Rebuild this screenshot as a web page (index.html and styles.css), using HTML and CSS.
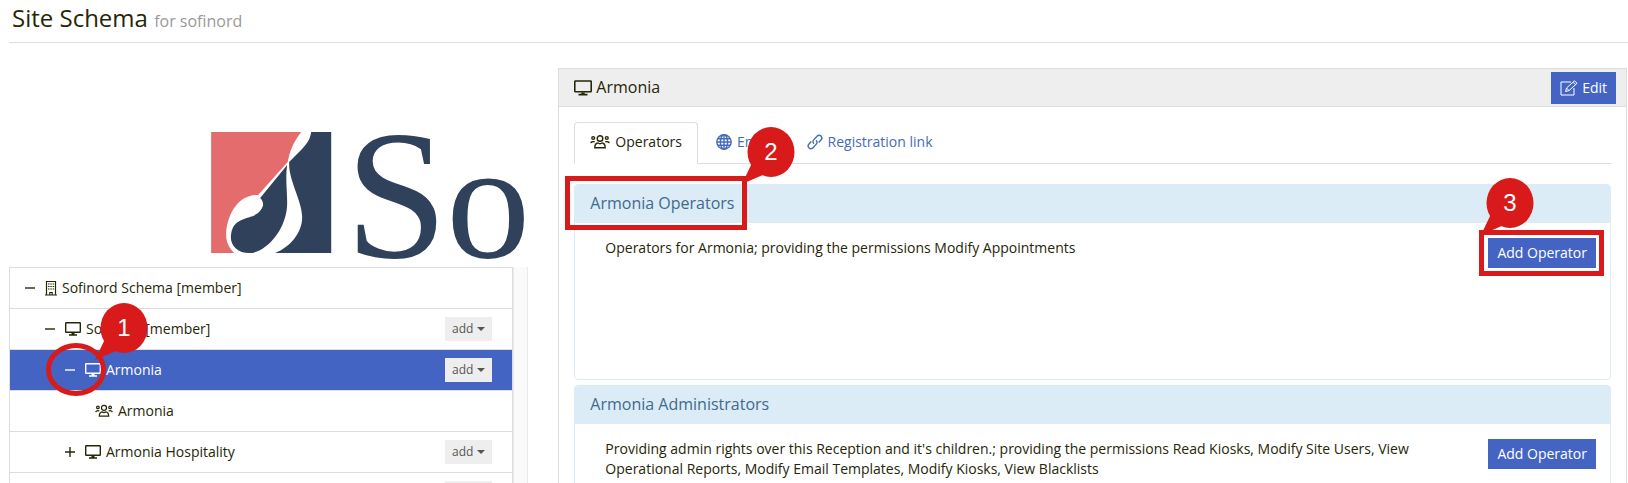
FILE: index.html
```
<!DOCTYPE html>
<html lang="en">
<head>
  <meta charset="UTF-8" />
  <title>Site Schema</title>
  <link rel="stylesheet" href="styles.css">
</head>
<body>

  <!-- Icons -->
  <svg class="sprite" aria-hidden="true">
    <symbol id="i-minus" viewBox="0 0 12 12"><path d="M1 6h10" /></symbol>
    <symbol id="i-plus" viewBox="0 0 12 12"><path d="M1 6h10M6 1v10" /></symbol>
    <symbol id="i-building" viewBox="0 0 12 16">
      <path d="M1.500 15V1.500h9V15M0 15h12M4.800 15v-2.500h2.400V15" />
      <path d="M3 4h1.500M5.300 4h1.500M7.600 4h1.500M3 6.500h1.500M5.300 6.500h1.500M7.600 6.500h1.500M3 9h1.500M5.300 9h1.500M7.600 9h1.500" />
    </symbol>
    <symbol id="i-monitor" viewBox="0 0 16 16">
      <rect x="0.700" y="1.700" width="14.600" height="9.600" rx="0.500" />
      <path d="M6.500 12h3v1.200H12v1.500H4v-1.500h2.500z" fill="currentColor" stroke="none" />
    </symbol>
    <symbol id="i-users" viewBox="0 0 20 16">
      <circle cx="10" cy="4.500" r="2.800" />
      <path d="M4.800 13.800c0-3 1.400-4.600 3.200-4.800 1.200.8 2.800.8 4 0 1.800.2 3.200 1.800 3.200 4.800z" />
      <circle cx="3.200" cy="4" r="1.400" />
      <circle cx="16.800" cy="4" r="1.400" />
      <path d="M.800 9.200c.2-1.600 2.400-1.800 4-1.300M19.200 9.200c-.2-1.600-2.400-1.800-4-1.300" />
    </symbol>
    <symbol id="i-globe" viewBox="0 0 16 16">
      <circle cx="8" cy="8" r="7.200" />
      <ellipse cx="8" cy="8" rx="3.600" ry="7.200" />
      <path d="M8 1v14M1 8h14M2 4.700h12M2 11.300h12" />
    </symbol>
    <symbol id="i-link" viewBox="0 0 16 16">
      <path d="M7 9.800C5.600 8.600 5.700 7 6.700 5.900L10 2.300c1.300-1.300 2.800-1.200 3.900-.2 1.200 1.100 1.200 2.700.1 3.900l-2.300 2.500" />
      <path d="M9 6.200c1.400 1.200 1.300 2.800.3 3.900L6 13.700c-1.300 1.300-2.800 1.200-3.900.2-1.200-1.100-1.200-2.700-.1-3.900l2.300-2.500" />
    </symbol>
    <symbol id="i-edit" viewBox="0 0 18 16">
      <path d="M11 2H1v13h13V8" />
      <path d="M5.500 11.500l1-3.500 8-7.200 2.500 2.500-8 7.300zM6.500 8l2.500 2.600M13 2.200l2.500 2.500" />
    </symbol>
    <symbol id="i-pin" viewBox="0 0 54 58">
      <ellipse cx="30" cy="25" rx="23.500" ry="25" />
      <path d="M1 57L11 36L24 47Z" />
    </symbol>
  </svg>

  <h1 class="page-header">Site Schema <small>for sofinord</small></h1>

  <main>
    <!-- Logo and tree -->
    <section class="sidebar">
      <svg class="logo" viewBox="0 0 519 213" role="img" aria-label="Sofinord">
        <path fill="#e56c6c" d="M202 78h90c-9 12-11 19-13.500 30L249 141c-21-1-32 22-32 40 0 7 3 13 8 18h-23z" />
        <path fill="#30415c" d="M302 78h20v121h-56c15-6 27-20 27-36 0-16-14-37-13-55 14-14 21-20 22-30z" />
        <path fill="#30415c" d="M278 111c-2 12 0 24 0 38 0 26-21 50-38 50-12 0-20-9-18-19 3-22 27-11 32-29 0-3-1-5-3-7z" />
        <text x="336" y="203" class="logo-text">S<tspan class="logo-small" x="437">o</tspan></text>
      </svg>

      <div class="tree-wrap">
        <ul class="tree">
          <li class="level-1">
            <svg class="icon toggle"><use href="#i-minus" /></svg>
            <svg class="icon building"><use href="#i-building" /></svg>
            <span>Sofinord Schema [member]</span>
          </li>
          <li class="level-2">
            <svg class="icon toggle"><use href="#i-minus" /></svg>
            <svg class="icon monitor"><use href="#i-monitor" /></svg>
            <span>Sofinord [member]</span>
            <button class="btn-add">add</button>
          </li>
          <li class="level-3 active">
            <svg class="icon toggle"><use href="#i-minus" /></svg>
            <svg class="icon monitor"><use href="#i-monitor" /></svg>
            <span>Armonia</span>
            <button class="btn-add">add</button>
            <div class="ring"></div>
            <svg class="pin pin-tree"><use href="#i-pin" /><text x="30" y="33">1</text></svg>
          </li>
          <li class="level-4">
            <svg class="icon users"><use href="#i-users" /></svg>
            <span>Armonia</span>
          </li>
          <li class="level-3">
            <svg class="icon toggle"><use href="#i-plus" /></svg>
            <svg class="icon monitor"><use href="#i-monitor" /></svg>
            <span>Armonia Hospitality</span>
            <button class="btn-add">add</button>
          </li>
          <li class="level-3">
            <button class="btn-add">add</button>
          </li>
        </ul>
        <div class="track"></div>
      </div>
    </section>

    <!-- Selected site -->
    <section class="site">
      <header>
        <svg class="icon monitor-lg"><use href="#i-monitor" /></svg>
        <h2>Armonia</h2>
        <button class="btn btn-edit"><svg class="icon edit"><use href="#i-edit" /></svg>Edit</button>
      </header>

      <div class="site-body">
        <nav class="tabs">
          <a href="#operators" class="active"><svg class="icon users-lg"><use href="#i-users" /></svg>Operators</a>
          <a href="#email"><svg class="icon globe"><use href="#i-globe" /></svg>Email</a>
          <a href="#registration"><svg class="icon globe"><use href="#i-link" /></svg>Registration link</a>
        </nav>

        <div class="panel panel-first" id="operators">
          <h3>Armonia Operators</h3>
          <div class="panel-body">
            <p>Operators for Armonia; providing the permissions Modify Appointments</p>
            <div class="action">
              <button class="btn">Add Operator</button>
              <div class="frame frame-button"></div>
              <svg class="pin pin-button"><use href="#i-pin" /><text x="30" y="33">3</text></svg>
            </div>
          </div>
          <div class="frame frame-title"></div>
          <svg class="pin pin-title"><use href="#i-pin" /><text x="30" y="33">2</text></svg>
        </div>

        <div class="panel">
          <h3>Armonia Administrators</h3>
          <div class="panel-body">
            <p>Providing admin rights over this Reception and it's children.; providing the permissions Read Kiosks, Modify Site Users, View Operational Reports, Modify Email Templates, Modify Kiosks, View Blacklists</p>
            <div class="action">
              <button class="btn">Add Operator</button>
            </div>
          </div>
        </div>
      </div>
    </section>
  </main>

</body>
</html>
```
FILE: styles.css
```
* { margin: 0; padding: 0; box-sizing: border-box; }

html { overflow: hidden; }

body {
  height: 100vh;
  overflow: hidden;
  font-family: "Open Sans", sans-serif;
  font-size: 14px;
  line-height: 20px;
  color: #262608;
  background: #fff;
}

button { font: inherit; border: 0; cursor: pointer; }

.sprite { display: none; }

.icon {
  flex: none;
  fill: none;
  stroke: currentColor;
  stroke-width: 1.4;
}

.toggle { width: 12px; height: 12px; margin-right: 9px; }
.building { width: 12px; height: 16px; margin-right: 5px; stroke-width: 1.2; }
.monitor { width: 16px; height: 16px; margin-right: 5px; }
.monitor-lg { width: 18px; height: 18px; margin-right: 4px; }
.users { width: 18px; height: 16px; margin-right: 5px; }
.users-lg { width: 20px; height: 16px; margin-right: 5px; }
.globe { width: 16px; height: 16px; margin-right: 5px; }
.edit { width: 18px; height: 16px; margin-right: 4px; stroke-width: 1; }

.page-header {
  margin-left: 9px;
  padding: 1px 3px 7px;
  height: 43px;
  border-bottom: 1px solid #ddd;
  font-size: 24px;
  font-weight: 400;
  line-height: 34px;
}

.page-header small { font-size: 16px; color: #999; }

main {
  display: grid;
  grid-template-columns: repeat(12, 1fr);
  gap: 30px;
  margin: 0 1px 0 9px;
}

/* Left column */
.sidebar { grid-column: span 4; padding-top: 11px; }

.logo { display: block; width: 100%; }

.logo-text {
  font-family: "Liberation Serif", serif;
  font-size: 184px;
  fill: #30415c;
}

.logo-small { font-size: 168px; }

.tree-wrap { display: flex; }

.tree {
  flex: 1;
  list-style: none;
  border: 1px solid #ddd;
}

.tree li {
  position: relative;
  display: flex;
  align-items: center;
  height: 41px;
  padding-right: 20px;
  border-bottom: 1px solid #ddd;
}

.level-1 { padding-left: 14px; }
.level-2 { padding-left: 34px; }
.level-3 { padding-left: 54px; }
.level-4 { padding-left: 85px; }

.tree .active { background: #4464c4; color: #fff; }
.tree .active span { font-weight: 500; }

.btn-add {
  display: flex;
  align-items: center;
  margin-left: auto;
  height: 24px;
  padding: 0 7px;
  background: #eee;
  color: #555;
  font-size: 12px;
}

.btn-add::after {
  content: "";
  margin-left: 4px;
  border: 4px solid transparent;
  border-top-color: #555;
  border-bottom: 0;
}

.track {
  width: 15px;
  background: #fafafa;
  border: solid #eaeaea;
  border-width: 0 1px;
}

/* Right column */
.site {
  grid-column: span 8;
  margin-top: 25px;
  border: 1px solid #ddd;
}

.site header {
  display: flex;
  align-items: center;
  height: 38px;
  padding: 0 10px 0 15px;
  background: #eee;
  border-bottom: 1px solid #ddd;
}

.site h2 { padding-bottom: 2px; font-size: 16px; font-weight: 400; }

.btn {
  display: flex;
  align-items: center;
  height: 30px;
  padding: 0 9px;
  background: #4464c4;
  color: #fff;
  font-weight: 500;
}

.btn-edit { height: 32px; margin-left: auto; }

.site-body { padding: 15px; }

.tabs {
  display: flex;
  gap: 2px;
  margin-bottom: 20px;
  border-bottom: 1px solid #ddd;
}

.tabs a {
  display: flex;
  align-items: center;
  height: 42px;
  margin-bottom: -1px;
  padding: 0 15px 2px;
  border: 1px solid transparent;
  border-radius: 4px 4px 0 0;
  color: #446cb8;
  text-decoration: none;
}

.tabs .active {
  border-color: #ddd;
  border-bottom-color: #fff;
  background: #fff;
  color: #262608;
}

.panel {
  position: relative;
  margin-bottom: 5px;
  border: 1px solid #dbecf6;
  border-radius: 4px;
}

.panel-first { min-height: 196px; }

.panel h3 {
  padding: 8px 15px 10px;
  background: #dbecf6;
  color: #416a8e;
  font-size: 16px;
  font-weight: 400;
}

.panel-body {
  display: flex;
  justify-content: space-between;
  gap: 60px;
  padding: 15px 14px 15px 30px;
}

.panel-body p { max-width: 820px; }

.action { position: relative; flex: none; }

/* Numbered callouts */
.ring {
  position: absolute;
  left: 36px;
  top: -7px;
  width: 60px;
  height: 53px;
  border: 5px solid #d81a1a;
  border-radius: 50%;
  z-index: 1;
}

.frame { position: absolute; border: 5px solid #d81a1a; }
.frame-title { left: -10px; top: -9px; width: 182px; height: 54px; }
.frame-button { inset: -8px -8px -8px -9px; }

.pin {
  position: absolute;
  width: 54px;
  height: 58px;
  fill: #d81a1a;
  z-index: 2;
}

.pin text {
  fill: #fff;
  font-family: "Liberation Sans", sans-serif;
  font-size: 24px;
  text-anchor: middle;
}

.pin-tree { left: 84px; top: -47px; }
.pin-title { left: 166px; top: -58px; }
.pin-button { left: -8px; top: -60px; }
```
